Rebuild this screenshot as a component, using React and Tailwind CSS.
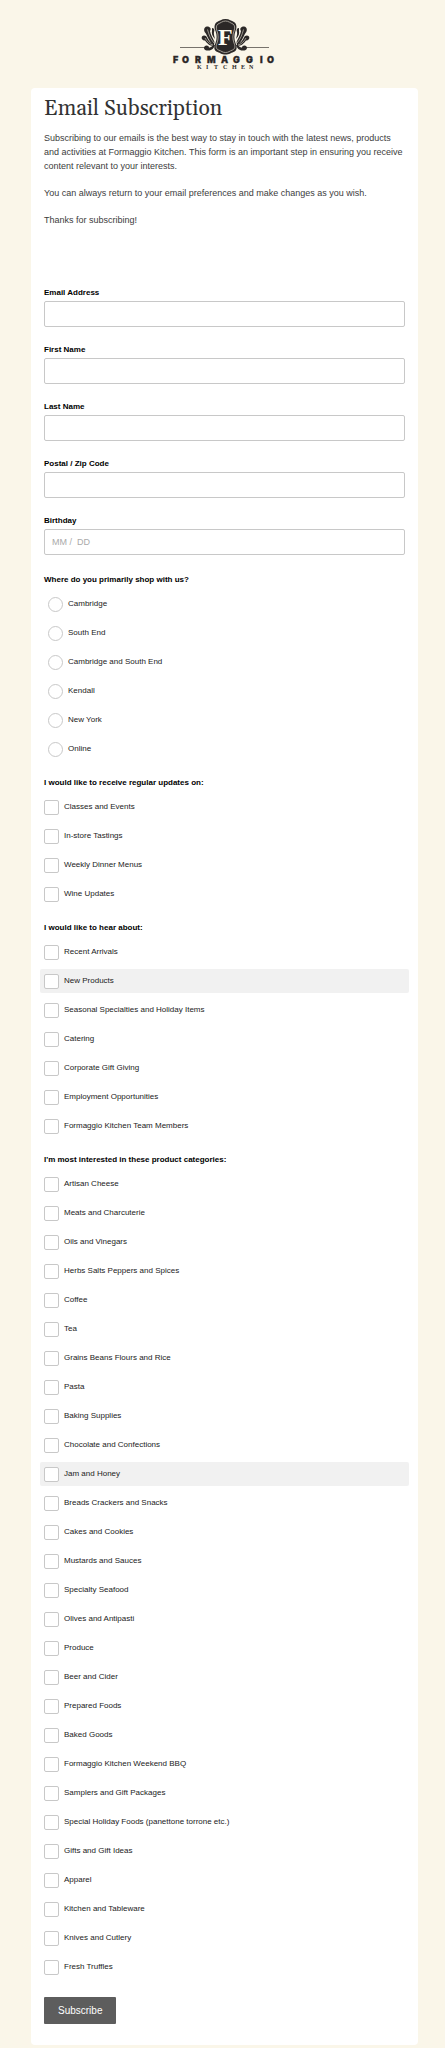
const stores = ["Cambridge", "South End", "Cambridge and South End", "Kendall", "New York", "Online"];

const fields = [
  { id: "email", label: "Email Address", type: "email" },
  { id: "first-name", label: "First Name", type: "text" },
  { id: "last-name", label: "Last Name", type: "text" },
  { id: "postal-code", label: "Postal / Zip Code", type: "text" },
  { id: "birthday", label: "Birthday", type: "text", placeholder: "MM /  DD" },
];

const groups = [
  {
    title: "I would like to receive regular updates on:",
    options: ["Classes and Events", "In-store Tastings", "Weekly Dinner Menus", "Wine Updates"],
  },
  {
    title: "I would like to hear about:",
    highlighted: "New Products",
    options: [
      "Recent Arrivals",
      "New Products",
      "Seasonal Specialties and Holiday Items",
      "Catering",
      "Corporate Gift Giving",
      "Employment Opportunities",
      "Formaggio Kitchen Team Members",
    ],
  },
  {
    title: "I'm most interested in these product categories:",
    highlighted: "Jam and Honey",
    options: [
      "Artisan Cheese",
      "Meats and Charcuterie",
      "Oils and Vinegars",
      "Herbs Salts Peppers and Spices",
      "Coffee",
      "Tea",
      "Grains Beans Flours and Rice",
      "Pasta",
      "Baking Supplies",
      "Chocolate and Confections",
      "Jam and Honey",
      "Breads Crackers and Snacks",
      "Cakes and Cookies",
      "Mustards and Sauces",
      "Specialty Seafood",
      "Olives and Antipasti",
      "Produce",
      "Beer and Cider",
      "Prepared Foods",
      "Baked Goods",
      "Formaggio Kitchen Weekend BBQ",
      "Samplers and Gift Packages",
      "Special Holiday Foods (panettone torrone etc.)",
      "Gifts and Gift Ideas",
      "Apparel",
      "Kitchen and Tableware",
      "Knives and Cutlery",
      "Fresh Truffles",
    ],
  },
];

function Scroll() {
  return (
    <g>
      <path d="M42 28 C37 25 36 20 33.500 16 C31.500 14 31.500 10 35 9.500 C38.500 9.500 39.500 12 38 14 C38.500 18 41 21 42.500 25Z" />
      <path d="M40 11 C42 11 43 13 42 15 C41.500 17 42.500 20 43 22 C40 19 39.500 16 40 14Z" />
      <path d="M42 29 C37 29 35 26 33 23.500 C30.500 23.500 29 21.500 30 19.500 C31.500 17.500 34.500 18.500 35 20.500 C36.500 24 39 26.500 42 27Z" />
      <path d="M43 28 C42 31 40 33.500 36.500 33.500 C33 34 31 31.500 32.500 29.500 C34 27.500 37 28.500 37 30.500 C40 30.500 40 28 43 28Z" />
      <path d="M35.500 12.500 C37 18 38.500 22 42 26 M33 21 C35 24.500 38 27.500 41 28" fill="none" stroke="#e0dbcd" strokeWidth="0.6" />
    </g>
  );
}

function Logo() {
  return (
    <svg viewBox="0 0 106 54" className="h-[54px] w-[106px]" role="img" aria-label="Formaggio Kitchen" fill="#2b2827">
      <path d="M8 30.500H36M70 30.500H97" stroke="#77736c" strokeWidth="1" />
      <Scroll />
      <g transform="translate(107 0) scale(-1 1)">
        <Scroll />
      </g>
      <path d="M53.500 2 C57.500 2 59.500 4 62 5 C65 7 65 11 63.500 14 C62 18 62 22 63.500 26 C65.500 30 65 34 61.500 35 C58.500 36 57.500 37.500 53.500 37.500 C49.500 37.500 48.500 36 45.500 35 C42 34 41.500 30 43.500 26 C45 22 45 18 43.500 14 C42 11 42 7 45 5 C47.500 4 49.500 2 53.500 2Z" />
      <path
        d="M53.500 4 C56.500 4 58.500 6 61 7 C63 8.500 63 11 62 14 C60.500 18 60.500 22 62 26 C63.500 29.500 63 32 60.500 33 C57.500 34 56.500 35.500 53.500 35.500 C50.500 35.500 49.500 34 46.500 33 C44 32 43.500 29.500 45 26 C46.500 22 46.500 18 45 14 C44 11 44 8.500 46 7 C48.500 6 50.500 4 53.500 4Z"
        fill="none"
        stroke="#bcb8ad"
        strokeWidth="0.8"
      />
      <text x="46" y="28" fontFamily="Liberation Serif, serif" fontWeight="700" fontSize="24" fill="#fdfbf2">F</text>
      <text
        x="1 10 23 35 49 61 74 88 95"
        y="45.500"
        fontFamily="Inter, sans-serif"
        fontWeight="900"
        fontSize="9"
        stroke="#2b2827"
        strokeWidth="0.3"
      >
        FORMAGGIO
      </text>
      <text x="25 34 42 51 60 69 77" y="52" fontFamily="Liberation Serif, serif" fontWeight="700" fontSize="6">KITCHEN</text>
    </svg>
  );
}

function Option({ type, name, label, highlighted }) {
  return (
    <li className={highlighted ? "-mx-1 rounded-xs bg-[#f1f1f1] px-1" : "-mx-1 px-1"}>
      <label className={type === "radio" ? "flex h-6 items-center gap-[5px] pl-1" : "flex h-6 items-center gap-[5px]"}>
        <input
          type={type}
          name={name}
          value={label}
          className={
            type === "radio"
              ? "size-[15px] shrink-0 appearance-none rounded-full border border-[#c8c8c8] bg-white checked:bg-[#5d5d5d]"
              : "size-[15px] shrink-0 appearance-none rounded-xs border border-[#c8c8c8] bg-white checked:bg-[#5d5d5d]"
          }
        />
        <span className="text-[8px] leading-3 text-[#222]">{label}</span>
      </label>
    </li>
  );
}

export default function App() {
  return (
    <div className="bg-[#faf6e9] pr-[27px] pb-[3px] pl-[31px] font-['Liberation_Sans',Arial,sans-serif]">
      <header className="flex justify-center pt-[17px] pb-[17px]">
        <Logo />
      </header>
      <main className="rounded bg-white px-[13px] pt-[7px] pb-[21px]">
        <h1 className="font-[Georgia,Gelasio,'Liberation_Serif',serif] text-[21px] leading-7 text-[#333]">Email Subscription</h1>
        <div className="mt-2 flex flex-col gap-[13px] text-[9px] leading-[14px] text-[#3c3c3c]">
          <p>
            Subscribing to our emails is the best way to stay in touch with the latest news, products and activities at
            Formaggio Kitchen. This form is an important step in ensuring you receive content relevant to your interests.
          </p>
          <p>You can always return to your email preferences and make changes as you wish.</p>
          <p>Thanks for subscribing!</p>
        </div>

        <form className="mt-[60px]" onSubmit={(event) => event.preventDefault()}>
          <div className="flex flex-col gap-[17px]">
            {fields.map((field) => (
              <div key={field.id} className="flex flex-col gap-[2px]">
                <label htmlFor={field.id} className="text-[8px] leading-3 font-bold text-black">
                  {field.label}
                </label>
                <input
                  id={field.id}
                  name={field.id}
                  type={field.type}
                  placeholder={field.placeholder}
                  className="h-[26px] w-full rounded-xs border border-[#c8c8c8] bg-white px-[7px] text-[9px] placeholder:text-[#aaa]"
                />
              </div>
            ))}
          </div>

          <fieldset className="mt-[19px]">
            <legend className="text-[8px] leading-3 font-bold text-black">Where do you primarily shop with us?</legend>
            <ul className="mt-[6px] flex flex-col gap-[5px]">
              {stores.map((store) => (
                <Option key={store} type="radio" name="store" label={store} />
              ))}
            </ul>
          </fieldset>

          {groups.map((group) => (
            <fieldset key={group.title} className="mt-4">
              <legend className="text-[8px] leading-3 font-bold text-black">{group.title}</legend>
              <ul className="mt-[6px] flex flex-col gap-[5px]">
                {group.options.map((option) => (
                  <Option
                    key={option}
                    type="checkbox"
                    name={group.title}
                    label={option}
                    highlighted={option === group.highlighted}
                  />
                ))}
              </ul>
            </fieldset>
          ))}

          <button type="submit" className="mt-[18px] block h-[27px] rounded-[1px] bg-[#5d5d5d] px-[14px] text-[10px] text-white">
            Subscribe
          </button>
        </form>
      </main>
    </div>
  );
}
